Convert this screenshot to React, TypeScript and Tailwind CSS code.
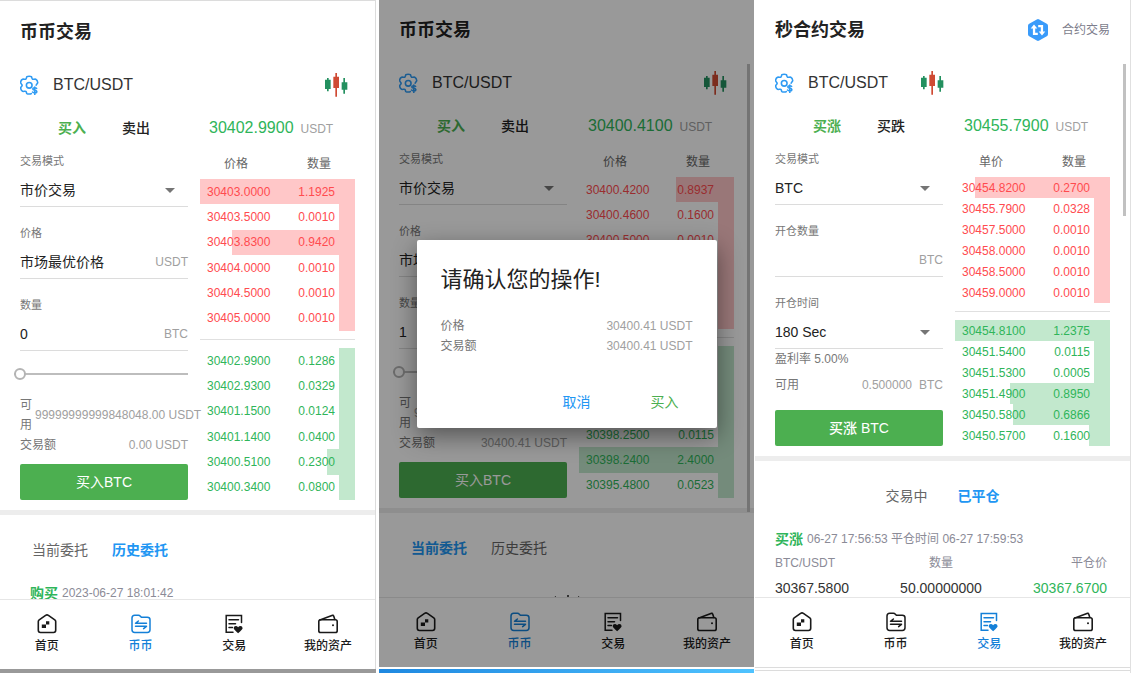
import { useState, type ReactNode } from "react";
import clsx from "clsx";

type Level = { price: string; amount: string; depth: number };

const spotBook = {
  asks: [
    { price: "30403.0000", amount: "1.1925", depth: 100 },
    { price: "30403.5000", amount: "0.0010", depth: 10.5 },
    { price: "30403.8300", amount: "0.9420", depth: 79.5 },
    { price: "30404.0000", amount: "0.0010", depth: 10.5 },
    { price: "30404.5000", amount: "0.0010", depth: 10.5 },
    { price: "30405.0000", amount: "0.0010", depth: 10.5 },
  ],
  bids: [
    { price: "30402.9900", amount: "0.1286", depth: 10.5 },
    { price: "30402.9300", amount: "0.0329", depth: 10.5 },
    { price: "30401.1500", amount: "0.0124", depth: 10.5 },
    { price: "30401.1400", amount: "0.0400", depth: 10.5 },
    { price: "30400.5100", amount: "0.2300", depth: 18 },
    { price: "30400.3400", amount: "0.0800", depth: 10.5 },
  ],
};

const confirmBook = {
  asks: [
    { price: "30400.4200", amount: "0.8937", depth: 37.5 },
    { price: "30400.4600", amount: "0.1600", depth: 10.5 },
    { price: "30400.5000", amount: "0.0010", depth: 10.5 },
    { price: "30401.0000", amount: "0.0010", depth: 10.5 },
    { price: "30401.5000", amount: "0.0010", depth: 10.5 },
    { price: "30402.0000", amount: "0.0010", depth: 10.5 },
  ],
  bids: [
    { price: "30400.4100", amount: "0.0286", depth: 10.5 },
    { price: "30399.9300", amount: "0.0329", depth: 10.5 },
    { price: "30399.1500", amount: "0.0124", depth: 10.5 },
    { price: "30398.2500", amount: "0.0115", depth: 10.5 },
    { price: "30398.2400", amount: "2.4000", depth: 100 },
    { price: "30395.4800", amount: "0.0523", depth: 10.5 },
  ],
};

const secondsBook = {
  asks: [
    { price: "30454.8200", amount: "0.2700", depth: 87 },
    { price: "30455.7900", amount: "0.0328", depth: 10.5 },
    { price: "30457.5000", amount: "0.0010", depth: 10.5 },
    { price: "30458.0000", amount: "0.0010", depth: 10.5 },
    { price: "30458.5000", amount: "0.0010", depth: 10.5 },
    { price: "30459.0000", amount: "0.0010", depth: 10.5 },
  ],
  bids: [
    { price: "30454.8100", amount: "1.2375", depth: 100 },
    { price: "30451.5400", amount: "0.0115", depth: 10.5 },
    { price: "30451.5300", amount: "0.0005", depth: 10.5 },
    { price: "30451.4900", amount: "0.8950", depth: 64.5 },
    { price: "30450.5800", amount: "0.6866", depth: 62.5 },
    { price: "30450.5700", amount: "0.1600", depth: 13.5 },
  ],
};

/* ---------- icons ---------- */

function GearIcon() {
  return (
    <svg className="size-5 shrink-0" viewBox="1.500 .5 18.500 19" fill="none" stroke="#2f9bf3" strokeWidth="1.500" strokeLinecap="round" strokeLinejoin="round">
      <path d="M12 18.2c-.7.5-3.400.5-4.200 0-.5-.5-.4-1.800-1-2.200-.8-.5-2.200.4-3.100 0-.8-.5-1.800-2.300-1.900-3.200 0-.8 1.500-1.600 1.500-2.500S1.700 8.500 1.800 7.600c.1-.9 1.100-2.700 1.900-3.100.9-.4 2.300.4 3.100 0 .7-.5.5-1.900 1.100-2.400.8-.5 3.300-.5 4.100 0 .6.500.4 1.900 1.100 2.400.8.4 2.200-.4 3.100 0 .8.4 1.800 2.200 1.900 3.100 0 .9-1.400 1.700-1.500 2.500" />
      <circle cx="10" cy="10.300" r="2.700" />
      <path d="M17 13.200c-.6-.8-3.600-1-3.600.6s3.900.8 3.900 2.500c0 1.500-3.200 1.500-4.100.4M15.300 12v7" />
    </svg>
  );
}

function CandlesIcon() {
  return (
    <svg className="size-6 shrink-0" viewBox="0 0 72 72">
      <path fill="#23905f" d="M3 20h6v-5h5v5h6v28h-6v7H9v-7H3zM53 28h5V15h5v13h7v22h-7v12h-5V50h-5z" />
      <path fill="#cf4a33" d="M28 11h6V0h5v11h6v34h-6v26h-5V45h-6z" />
    </svg>
  );
}

function SwapHexIcon() {
  return (
    <svg className="h-[22px] w-5 shrink-0" viewBox="0 0 20 22">
      <path fill="#3a9bfa" d="M8.800.4a2.400 2.400 0 0 1 2.400 0l7.600 4.300A2.400 2.400 0 0 1 20 6.700v8.600a2.400 2.400 0 0 1-1.200 2l-7.600 4.300a2.400 2.400 0 0 1-2.400 0l-7.600-4.300A2.400 2.400 0 0 1 0 15.300V6.700a2.400 2.400 0 0 1 1.200-2z" />
      <path fill="#fff" d="M6 5.500l3.300 4H7.200v4.300h2.600V16H4.900V9.500H2.700zM14 16.500l-3.300-4h2.100V8.200h-2.600V6h4.900v6.500h2.200z" />
    </svg>
  );
}

function HomeIcon() {
  return (
    <svg className="size-5" viewBox="0 0 20 20" fill="none" stroke="currentColor" strokeWidth="1.600" strokeLinejoin="round">
      <path d="M1.300 7.500Q1.300 6.500 2.200 5.800L8.600 1.300Q10 .4 11.400 1.300L17.800 5.800Q18.700 6.500 18.700 7.500V16.300Q18.700 18.500 16.500 18.500H3.500Q1.300 18.500 1.300 16.300Z" />
      <path fill="currentColor" stroke="none" d="M9 7.300h3.300v3.300H9V14H4.800v-3.400H9z" />
    </svg>
  );
}

function CoinIcon() {
  return (
    <svg className="size-5" viewBox="0 0 20 20" fill="none" stroke="currentColor" strokeWidth="1.500" strokeLinejoin="round" strokeLinecap="round">
      <path d="M1 4q0-2.700 2.700-2.700h3.800q1 0 1.700.8l1.200 1.200h5.900q2.700 0 2.700 2.400v10q0 2.700-2.700 2.700H3.700Q1 18.400 1 15.700z" />
      <path d="M15.500 9.300h-11L7.400 7M4.500 12.300h11l-2.900 2.300" />
    </svg>
  );
}

function TradeIcon() {
  return (
    <svg className="size-5" viewBox="0 0 20 20" fill="none" stroke="currentColor" strokeWidth="1.500" strokeLinecap="round">
      <path d="M17.500 8.500V1.500H2.200V18.300H9M5 5.700h9.500M5 9.700h6.500M5 13.500h3.500" />
      <path fill="currentColor" stroke="none" d="M9.700 14.200q0-2.300 2.200-2.300 1.200 0 2.200 1.300 1-1.300 2.200-1.300 2.300 0 2.300 2.300 0 1-4.500 5-4.400-4-4.400-5z" />
    </svg>
  );
}

function WalletIcon() {
  return (
    <svg className="size-5" viewBox="0 0 20 20" fill="none" stroke="currentColor" strokeWidth="1.600" strokeLinejoin="round">
      <rect x=".8" y="5.800" width="18.400" height="12.700" rx="1.800" />
      <path d="M1.200 6.300L14.600 1.300q.8-.2 1 .5L17 6" />
      <circle cx="15" cy="11.300" r="1" fill="currentColor" stroke="none" />
    </svg>
  );
}

function Caret() {
  return (
    <svg className="pointer-events-none mr-[13px] h-[5px] w-[10px] [grid-area:1/1] self-center justify-self-end" viewBox="0 0 10 5">
      <path fill="#757575" d="M0 0h10L5 5z" />
    </svg>
  );
}

/* ---------- order book ---------- */

function Levels({ rows, side }: { rows: Level[]; side: "ask" | "bid" }) {
  return (
    <ul className="flex flex-1 flex-col">
      {rows.map((row) => (
        <li key={row.price} className="grid flex-1">
          <span
            className={clsx("justify-self-end [grid-area:1/1]", side === "ask" ? "bg-[#ffc7c8]" : "bg-[#c2e8cd]")}
            style={{ width: `${row.depth}%` }}
          />
          <span
            className={clsx(
              "flex items-center justify-between pr-5 pl-[7px] leading-5 [grid-area:1/1]",
              side === "ask" ? "text-[#ff4b4f]" : "text-[#2fb55a]",
            )}
          >
            <span>{row.price}</span>
            <span>{row.amount}</span>
          </span>
        </li>
      ))}
    </ul>
  );
}

function OrderBook({ priceLabel, asks, bids }: { priceLabel: string; asks: Level[]; bids: Level[] }) {
  return (
    <div className="flex w-[155px] flex-col text-xs">
      <div className="mb-[3px] flex h-6 items-center justify-between px-6 text-[#666]">
        <span>{priceLabel}</span>
        <span>数量</span>
      </div>
      <Levels rows={asks} side="ask" />
      <hr className="my-2 border-[#e0e0e0]" />
      <Levels rows={bids} side="bid" />
    </div>
  );
}

/* ---------- form ---------- */

function SelectField({ id, label, options }: { id: string; label: string; options: string[] }) {
  return (
    <div className="border-b border-[#dcdcdc]">
      <label htmlFor={id} className="block h-4 text-[11px] leading-4 text-[#777]">{label}</label>
      <div className="mt-[5px] grid h-8">
        <select id={id} className="w-full appearance-none bg-transparent text-sm text-[#222] outline-none [grid-area:1/1]">
          {options.map((o) => (
            <option key={o}>{o}</option>
          ))}
        </select>
        <Caret />
      </div>
    </div>
  );
}

function InputField({ id, label, value, unit, readOnly }: { id: string; label: string; value: string; unit: string; readOnly?: boolean }) {
  return (
    <div className="border-b border-[#dcdcdc]">
      <label htmlFor={id} className="block h-4 text-[11px] leading-4 text-[#777]">{label}</label>
      <div className="mt-[5px] flex h-8 items-center">
        <input id={id} defaultValue={value} readOnly={readOnly} className="w-0 flex-1 bg-transparent text-sm text-[#222] outline-none" />
        <span className="text-xs text-[#a0a0a0]">{unit}</span>
      </div>
    </div>
  );
}

function SpotForm({ id, amount, total }: { id: string; amount: string; total: string }) {
  return (
    <form className="flex-1 pt-px" onSubmit={(e) => e.preventDefault()}>
      <div className="flex flex-col gap-[18px]">
        <SelectField id={`${id}-mode`} label="交易模式" options={["市价交易"]} />
        <InputField id={`${id}-price`} label="价格" value="市场最优价格" unit="USDT" readOnly />
        <InputField id={`${id}-amount`} label="数量" value={amount} unit="BTC" />
      </div>
      <div className="flex h-11 items-center pt-0.5">
        <input
          type="range"
          aria-label="数量"
          defaultValue={0}
          className="-ml-[6px] h-3 w-[calc(100%+6px)] appearance-none bg-transparent [&::-webkit-slider-runnable-track]:h-[2px] [&::-webkit-slider-runnable-track]:bg-[#bdbdbd] [&::-webkit-slider-thumb]:-mt-[5px] [&::-webkit-slider-thumb]:size-3 [&::-webkit-slider-thumb]:appearance-none [&::-webkit-slider-thumb]:rounded-full [&::-webkit-slider-thumb]:border-2 [&::-webkit-slider-thumb]:border-[#b4b4b4] [&::-webkit-slider-thumb]:bg-white"
        />
      </div>
      <dl className="w-[168px] text-xs leading-5 text-[#777]">
        <div className="flex h-10 items-center">
          <dt className="w-[15px] shrink-0 pr-[3px]">可用</dt>
          <dd className="whitespace-nowrap text-[#a0a0a0]">99999999999848048.00 USDT</dd>
        </div>
        <div className="flex justify-between">
          <dt>交易额</dt>
          <dd className="text-[#a0a0a0]">{total} USDT</dd>
        </div>
      </dl>
      <button className="mt-[9px] h-9 w-full rounded-[2px] bg-[#4caf50] text-sm text-white">买入BTC</button>
    </form>
  );
}

function SecondsForm() {
  return (
    <form className="flex-1 pt-px" onSubmit={(e) => e.preventDefault()}>
      <div className="flex flex-col gap-[18px]">
        <SelectField id="sec-mode" label="交易模式" options={["BTC"]} />
        <InputField id="sec-amount" label="开仓数量" value="" unit="BTC" />
        <SelectField id="sec-time" label="开仓时间" options={["180 Sec"]} />
      </div>
      <p className="text-xs leading-5 text-[#777]">盈利率 5.00%</p>
      <p className="mt-[6px] flex text-xs leading-5 text-[#777]">
        <span className="flex-1">可用</span>
        <span className="mr-[7px] text-[#a0a0a0]">0.500000</span>
        <span className="text-[#a0a0a0]">BTC</span>
      </p>
      <button className="mt-[15px] h-9 w-full rounded-[2px] bg-[#4caf50] text-sm font-medium text-white">买涨 BTC</button>
    </form>
  );
}

/* ---------- page parts ---------- */

function PairRow({ compact }: { compact?: boolean }) {
  return (
    <div className={clsx("flex h-[38px] items-center gap-[13px]", compact ? "w-[169px]" : "pr-[7px]")}>
      <GearIcon />
      <span className="flex-1 text-base leading-6 text-[#333]">BTC/USDT</span>
      <CandlesIcon />
    </div>
  );
}

function SideRow({ buy, sell, price }: { buy: string; sell: string; price: string }) {
  return (
    <div className="flex h-12 items-center gap-3">
      <div className="flex flex-1 justify-center text-sm">
        <button className="h-9 w-16 font-bold text-[#4caf50]">{buy}</button>
        <button className="h-9 w-16 font-medium text-[#222]">{sell}</button>
      </div>
      <p className="flex w-[155px] items-baseline gap-[7px] pl-[9px] leading-6">
        <span className="text-base text-[#2fb55a]">{price}</span>
        <span className="text-xs text-[#a0a0a0]">USDT</span>
      </p>
    </div>
  );
}

function OrderTabs({ tabs, initial, className }: { tabs: string[]; initial: number; className: string }) {
  const [active, setActive] = useState(initial);
  return (
    <div className={clsx("flex h-[66px] items-center pt-1 text-sm", className)}>
      {tabs.map((tab, i) => (
        <button key={tab} onClick={() => setActive(i)} className={i === active ? "font-bold text-[#2196f3]" : "text-[#666]"}>
          {tab}
        </button>
      ))}
    </div>
  );
}

const navItems = [
  { label: "首页", Icon: HomeIcon },
  { label: "币币", Icon: CoinIcon },
  { label: "交易", Icon: TradeIcon },
  { label: "我的资产", Icon: WalletIcon },
];

function BottomNav({ active }: { active: string }) {
  return (
    <nav className="grid h-[70px] shrink-0 grid-cols-4 border-t border-[#e6e6e6] bg-white">
      {navItems.map(({ label, Icon }) => (
        <a
          key={label}
          href="#"
          className={clsx("flex flex-col items-center pt-[14px] text-xs leading-4 font-medium", label === active ? "text-[#1480d8]" : "text-[#1a1a1a]")}
        >
          <Icon />
          <span className="mt-1">{label}</span>
        </a>
      ))}
    </nav>
  );
}

type PhoneProps = {
  title: string;
  action?: ReactNode;
  nav: string;
  pair: ReactNode;
  sides: ReactNode;
  form: ReactNode;
  book: ReactNode;
  children: ReactNode;
};

function Phone({ title, action, nav, pair, sides, form, book, children }: PhoneProps) {
  return (
    <div className="flex min-h-0 flex-1 flex-col">
      <header className="mb-1 flex h-[60px] shrink-0 items-center justify-between px-5">
        <h1 className="text-lg leading-6 font-bold text-[#222]">{title}</h1>
        {action}
      </header>
      <main className="min-h-0 flex-1 overflow-hidden">
        <div className="px-5">
          {pair}
          {sides}
          <div className="flex gap-3">
            {form}
            {book}
          </div>
        </div>
        <div className="mt-[10px] h-[5px] bg-[#ededed]" />
        {children}
      </main>
      <BottomNav active={nav} />
    </div>
  );
}

function ConfirmDialog() {
  return (
    <div className="absolute inset-0 flex items-center justify-center bg-black/40">
      <div role="dialog" aria-labelledby="confirm-title" className="w-[300px] rounded-[2px] bg-white pt-6 pb-2 shadow-[0_8px_24px_rgba(0,0,0,0.45)]">
        <h2 id="confirm-title" className="px-6 text-[22px] leading-8 text-[#222]">请确认您的操作!</h2>
        <dl className="mt-5 px-6 text-xs leading-5">
          <div className="flex justify-between">
            <dt className="text-[#777]">价格</dt>
            <dd className="text-[#a0a0a0]">30400.41 USDT</dd>
          </div>
          <div className="flex justify-between">
            <dt className="text-[#777]">交易额</dt>
            <dd className="text-[#a0a0a0]">30400.41 USDT</dd>
          </div>
        </dl>
        <div className="mt-7 flex justify-end gap-6 pr-5 text-sm">
          <button className="h-9 w-16 text-[#2196f3]">取消</button>
          <button className="h-9 w-16 text-[#4caf50]">买入</button>
        </div>
      </div>
    </div>
  );
}

export default function App() {
  return (
    <div className="flex h-screen overflow-hidden bg-white pr-1 font-['Liberation_Sans','Noto_Sans_CJK_SC',sans-serif]">
      <section className="mr-[3px] flex flex-1 flex-col">
        <div className="flex min-h-0 flex-1 flex-col border-t border-r border-[#dcdcdc] pt-px">
          <Phone
            title="币币交易"
            nav="币币"
            pair={<PairRow />}
            sides={<SideRow buy="买入" sell="卖出" price="30402.9900" />}
            form={<SpotForm id="spot" amount="0" total="0.00" />}
            book={<OrderBook priceLabel="价格" {...spotBook} />}
          >
            <OrderTabs tabs={["当前委托", "历史委托"]} initial={1} className="gap-6 px-8" />
            <p className="flex items-center gap-1 px-[30px] text-xs leading-6 text-[#8b8b97]">
              <b className="text-sm leading-6 text-[#2fb55a]">购买</b>
              2023-06-27 18:01:42
            </p>
          </Phone>
        </div>
        <div className="h-1 bg-[#999]" />
      </section>

      <section className="flex flex-1 flex-col border-r border-white">
        <div className="relative flex min-h-0 flex-1 flex-col">
          <Phone
            title="币币交易"
            nav="币币"
            pair={<PairRow />}
            sides={<SideRow buy="买入" sell="卖出" price="30400.4100" />}
            form={<SpotForm id="confirm" amount="1" total="30400.41" />}
            book={<OrderBook priceLabel="价格" {...confirmBook} />}
          >
            <OrderTabs tabs={["当前委托", "历史委托"]} initial={0} className="gap-6 px-8" />
            {/* empty list illustration, mostly below the fold */}
            <svg className="mx-auto mt-4 h-10 w-[30px]" viewBox="0 0 30 40" fill="none" stroke="#555">
              <path strokeWidth="2" d="M16 0v6" />
              <path d="M3 1l3 4M27 1l-3 4M4 14h22v20H4z" />
            </svg>
          </Phone>
          <div className="absolute top-16 right-1 h-[448px] w-[3px] bg-[#c1c1c1]" />
          <ConfirmDialog />
        </div>
        <div className="mt-[2px] h-1 bg-linear-to-r from-[#1e88e0] to-[#4fc3ff]" />
      </section>

      <section className="flex flex-1 flex-col border-r border-[#e0e0e0]">
        <div className="relative flex min-h-0 flex-1 flex-col">
          <Phone
            title="秒合约交易"
            action={
              <a href="#" className="flex items-center gap-[14px] text-xs text-[#7d7d8c]">
                <SwapHexIcon />
                合约交易
              </a>
            }
            nav="交易"
            pair={<PairRow compact />}
            sides={<SideRow buy="买涨" sell="买跌" price="30455.7900" />}
            form={<SecondsForm />}
            book={<OrderBook priceLabel="单价" {...secondsBook} />}
          >
            <OrderTabs tabs={["交易中", "已平仓"]} initial={1} className="justify-center gap-[30px]" />
            <div className="pr-[23px] pl-5">
              <p className="flex items-center gap-1 text-xs leading-6 text-[#8b8b97]">
                <b className="text-sm leading-6 text-[#2fb55a]">买涨</b>
                06-27 17:56:53 平仓时间 06-27 17:59:53
              </p>
              <table className="w-full table-fixed">
                <thead className="text-xs leading-6 text-[#8b8b97]">
                  <tr>
                    <th className="p-0 text-left font-normal">BTC/USDT</th>
                    <th className="p-0 text-center font-normal">数量</th>
                    <th className="p-0 text-right font-normal">平仓价</th>
                  </tr>
                </thead>
                <tbody className="text-sm leading-[26px] text-[#333]">
                  <tr>
                    <td className="p-0">30367.5800</td>
                    <td className="p-0 text-center">50.00000000</td>
                    <td className="p-0 text-right text-[#2fb55a]">30367.6700</td>
                  </tr>
                </tbody>
              </table>
            </div>
          </Phone>
          <div className="absolute top-16 right-1 h-[152px] w-[3px] bg-[#c1c1c1]" />
        </div>
        <div className="mb-[2px] h-1 border-y border-[#dcdcdc]" />
      </section>
    </div>
  );
}
